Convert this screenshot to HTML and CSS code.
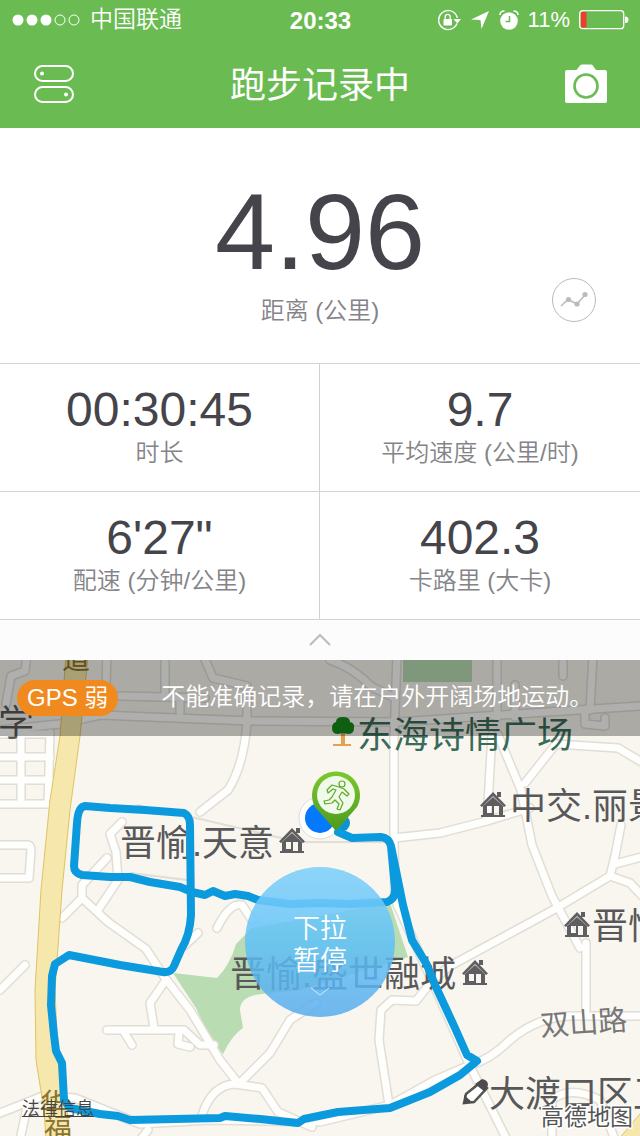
FILE: index.html
```html
<!DOCTYPE html>
<html lang="zh-CN">
<head>
    <meta charset="UTF-8">
    <meta name="viewport" content="width=device-width, initial-scale=1.0">
    <title>跑步记录中</title>
    <link rel="stylesheet" href="styles.css">
</head>
<body>

<header>
    <div class="status">
        <div class="carrier">
            <svg width="68" height="12" viewBox="0 0 68 12">
                <g fill="#fff"><circle cx="6" cy="6" r="5.5"/><circle cx="20" cy="6" r="5.5"/><circle cx="34" cy="6" r="5.5"/></g>
                <g fill="none" stroke="#fff"><circle cx="48" cy="6" r="5"/><circle cx="62" cy="6" r="5"/></g>
            </svg>
            <span>中国联通</span>
        </div>
        <time>20:33</time>
        <div class="indicators">
            <svg width="24" height="22" viewBox="0 0 24 22">
                <path d="M20 14.500A9.500 9.500 0 1 1 19.500 6.500L20.300 9" fill="none" stroke="#fff" stroke-width="1.400"/>
                <path d="M16.500 10h7.500l-3.700 4.500z" fill="#fff"/>
                <rect x="6.500" y="10" width="8.500" height="6.500" rx=".8" fill="#fff"/>
                <path d="M8.200 10.500V7.800a2.500 2.500 0 0 1 5 0v2.700" fill="none" stroke="#fff" stroke-width="1.300"/>
            </svg>
            <svg width="20" height="20" viewBox="0 0 20 20"><path d="M19 1 11.500 19 10.500 9.900 1 9.400z" fill="#fff"/></svg>
            <svg width="20" height="22" viewBox="0 0 20 22">
                <circle cx="10" cy="12" r="8.800" fill="#fff"/>
                <path d="M1 6Q1 2 5.500 2M19 6Q19 2 14.500 2" fill="none" stroke="#fff" stroke-width="1.600"/>
                <path d="M10.500 7v5.500H6.500" fill="none" stroke="#6abb52" stroke-width="1.500"/>
            </svg>
            <span>11%</span>
            <svg width="50" height="20" viewBox="0 0 50 20">
                <rect x=".7" y=".7" width="44" height="18" rx="3" fill="none" stroke="#fff" stroke-width="1.300"/>
                <rect x="2" y="2" width="5.500" height="15.500" rx="1" fill="#ee3d2b"/>
                <path d="M46 6.500q3.500 0 3.500 3.300T46 13z" fill="#fff"/>
            </svg>
        </div>
    </div>
    <nav>
        <button class="icon" aria-label="设置">
            <svg width="42" height="38" viewBox="0 0 42 38" fill="none" stroke="#fff" stroke-width="2">
                <rect x="2" y="1" width="38" height="15" rx="7.500"/>
                <rect x="2" y="22" width="38" height="15" rx="7.500"/>
                <circle cx="9" cy="8.500" r="1"/><circle cx="33" cy="29.500" r="1"/>
            </svg>
        </button>
        <h1>跑步记录中</h1>
        <button class="icon" aria-label="拍照">
            <svg width="42" height="40" viewBox="0 0 42 40">
                <path d="M2 6h9.500l3.500-4.500Q16 .5 17 .5h9q1 0 1.800 1L31 6h9q2 0 2 2v29q0 2-2 2H2q-2 0-2-2V8q0-2 2-2z" fill="#fff"/>
                <circle cx="21" cy="22" r="11.500" fill="none" stroke="#6abb52" stroke-width="2.600"/>
            </svg>
        </button>
    </nav>
</header>

<main>
    <section class="distance">
        <div class="value">4.96</div>
        <div class="label">距离 (公里)</div>
        <button class="chart" aria-label="图表">
            <svg width="28" height="18" viewBox="0 0 28 18" fill="none" stroke="#bbb" stroke-width="1.500">
                <path d="M1 15l7-6.500L17 13l8-9"/>
                <g fill="#bbb" stroke="none"><circle cx="8.500" cy="8.500" r="2.600"/><circle cx="17" cy="13" r="2.600"/><circle cx="25" cy="3.500" r="2.600"/></g>
            </svg>
        </button>
    </section>

    <section class="stats">
        <div class="stat"><div class="value">00:30:45</div><div class="label">时长</div></div>
        <div class="stat"><div class="value">9.7</div><div class="label">平均速度 (公里/时)</div></div>
        <div class="stat"><div class="value">6'27"</div><div class="label">配速 (分钟/公里)</div></div>
        <div class="stat"><div class="value">402.3</div><div class="label">卡路里 (大卡)</div></div>
    </section>

    <button class="collapse" aria-label="收起">
        <svg width="24" height="14" viewBox="0 0 24 14"><path d="M2 12 12 2l10 10" fill="none" stroke="#bbb" stroke-width="2"/></svg>
    </button>

    <section class="map">
        <svg class="canvas" viewBox="0 660 640 476" preserveAspectRatio="xMidYMin slice">
            <defs>
                <g id="roads">
                    <path d="M27 655 25 671 11 676 6 704M107 655 105 712M165 655V697M203 655 213 678 247 686V722M120 696 205 698M180 698V712"/>
                    <path d="M0 730 60 724 100 715 250 721 400 722 470 717 640 706"/>
                    <path d="M247 722Q244 765 228 790L200 812"/>
                    <path d="M330 660Q352 667 372 687L393 697M397 655 394 740V840L395 900 428 972 470 1066 507 1140"/>
                    <path d="M497 655V717M515 717V685M593 655 590 710M563 662V676M585 714V724L605 726V718"/>
                    <path d="M492 735 487 820M498 735 521 790 532 845 552 896 580 948M525 783 556 744 618 748 645 764"/>
                    <path d="M394 838 440 833 487 821 530 808M621 825 615 856 610 876M615 864 645 856"/>
                    <path d="M430 982 450 966 555 909 610 876 630 883 648 902M586 943V1015"/>
                    <path d="M470 1065Q490 1060 510 1040 540 1015 575 1016L640 1016"/>
                    <path d="M428 986 416 1001 392 1000 381 1010 379 1040 389 1105"/>
                    <path d="M-5 1115 43 1096 75 1098 140 1124 210 1120 320 1122 390 1105 435 1080 470 1065"/>
                    <path d="M202 1115Q212 1085 235 1084L262 1088Q270 1100 278 1112L312 1127M238 1083 220 1060 190 1010 165 978 146 949 108 922 82 898 62 918M82 898V885L107 858M98 910 118 880 116 852 110 834 122 822"/>
                    <path d="M240 1083 270 1053 290 1020 316 1003M107 1030H184L200 1045H214M124 1032 132 1045M154 1028 150 1003 166 980M179 1033 178 1044 190 1047M217 928Q230 902 242 905L252 920M184 946 198 933"/>
                    <path d="M0 990 25 965M28 1102 20 1140M148 1130 140 1140M552 1140V1100Q570 1085 600 1100L615 1140"/>
                    <path d="M0 845H27Q31 845 31 850L29 878H0M50 733 48 804H0M21 736V804M0 734H50M0 757H50M0 780H50"/>
                </g>
                <g id="house" fill="#5f5f61">
                    <path d="M0 13.500 13 0 26 13.500 24 15 13 4 2 15zM17 0h4v5h-4z"/>
                    <path fill-rule="evenodd" d="M3 14 13 5 23 14V25H3zM7 14v7h5v-7zM14 14v10h5V14z"/>
                    <path d="M1 23h24v2H1z"/>
                </g>
                <linearGradient id="pin" x1="0" y1="0" x2="0" y2="1"><stop offset="0" stop-color="#7ac92e"/><stop offset="1" stop-color="#4d9a1e"/></linearGradient>
            </defs>

            <rect y="660" width="640" height="476" fill="#f8f6ef"/>
            <g fill="#b9dcb2">
                <path d="M403 655H472V682H403z"/>
                <path d="M173 973 217 978Q230 965 236 944L252 928 390 903 408 957 300 990 262 994Q240 996 240 1010L243 1028Q232 1035 223 1054L208 1035 196 1008z"/>
            </g>
            <path d="M137 805 200 819 290 840M300 842H394M130 873 188 880V860" fill="none" stroke="#e2ddd5" stroke-width="2"/>
            <use href="#roads" class="casing"/>
            <use href="#roads" class="street"/>
            <path d="M66 655 60 736 50 800 41 890 35 990 36 1060 44 1110 46 1140H70L66 1100 58 1060 55 990 62 890 70 810 80 736 88 655z" fill="#f6e8ac" stroke="#dfc460"/>
            <path d="M618 1140 645 1108V1140z" fill="#f6e8ac" stroke="#dfc460"/>

            <g class="place">
                <text x="-2" y="736">学</text>
                <text x="120" y="856">晋愉.天意</text>
                <text x="510" y="819">中交.丽景</text>
                <text x="592" y="939">晋愉</text>
                <text x="230" y="987">晋愉.盛世融城</text>
                <text x="489" y="1107">大渡口区卫</text>
                <text x="357" y="748" class="park">东海诗情广场</text>
            </g>
            <g class="road-name">
                <text x="62" y="669">道</text>
                <text x="40" y="1114">华</text>
                <text x="44" y="1139">福</text>
                <text x="541" y="1036" class="side" transform="rotate(-4 541 1036)">双山路</text>
            </g>
            <use href="#house" x="279" y="828"/>
            <use href="#house" x="480" y="792"/>
            <use href="#house" x="564" y="912"/>
            <use href="#house" x="462" y="960"/>
            <path d="M466 1094 481 1082 487 1088 474 1102 464 1103z" fill="#fff" stroke="#555" stroke-width="2.500"/>
            <path d="M475 1084 482 1079Q488 1080 488 1085L485 1092zM464 1104V1095L472 1102z" fill="#4c4c4c"/>
            <path d="M341 730h4v14h6v2h-18v-2h8z" fill="#e3a24b"/>
            <path d="M343 717q7 0 7 5 5 1 4 6 0 6-6 6l-5-1-5 1q-6 0-6-6 0-5 4-6 0-5 7-5z" fill="#168a1c"/>

            <g class="location">
                <circle cx="320" cy="818" r="21" fill="#fff" stroke="#dcdcdc"/>
                <circle cx="320" cy="818" r="15" fill="#0479fb"/>
            </g>
            <circle cx="341" cy="823" r="9" fill="#0f93cf"/>
            <path class="route" d="M338 832 352 838 381 837Q389 838 391 846L395 888Q396 899 387 902L350 904 320 903 290 904 258 900 248 896 235 894 225 896 213 891 205 895 192 892 180 887 150 882 130 877 110 877 82 875Q74 873 74 866L77 823Q78 807 85 806L110 808 145 810 184 813Q190 816 190 825L191 915Q190 935 181 950L174 966Q171 973 163 972L120 965 69 955 55 964 52 976 51 1005 54 1035 56 1051 62 1063 64 1100 70 1108 100 1114 118 1116 130 1120 220 1118 225 1116 260 1119 298 1123 304 1119 338 1112 390 1108 430 1092 460 1075 477 1061 467 1055 455 1028 435 985 427 965 412 940 403 905 391 846"/>

            <path d="M336 831 315 807A24 24 0 1 1 357 807z" fill="url(#pin)"/>
            <circle cx="336" cy="795" r="19" fill="#f1faea"/>
            <g fill="none" stroke="#5aaa26" stroke-width="1.200" stroke-linejoin="round">
                <circle cx="342" cy="784" r="3"/>
                <path d="M339 787 332 785 327 790 328 793 333 789 336 790 332 797 329 800 324 801 325 804 332 803 335 800 339 804 337 809 340 810 343 803 339 797 342 792 347 796 349 794 344 789z"/>
            </g>
            <text x="541" y="1125" class="brand">高德地图</text>
        </svg>

        <div class="notice">
            <span class="gps">GPS 弱</span>
            <span>不能准确记录，请在户外开阔场地运动。</span>
        </div>
        <button class="pause">
            <span>下拉<br>暂停</span>
            <svg width="20" height="10" viewBox="0 0 20 10"><path d="M1 1 10 8 19 1" fill="none" stroke="#fff" stroke-opacity=".7"/></svg>
        </button>
        <a class="legal" href="#">法律信息</a>
    </section>
</main>

</body>
</html>
```
FILE: styles.css
```css
*{ box-sizing:border-box; }
body{
    margin:0;
    min-height:100vh;
    display:flex;
    flex-direction:column;
    font-family:"Liberation Sans", "Noto Sans CJK SC", sans-serif;
    background:#fff;
    color:#45444b;
}
button{ border:0; padding:0; background:none; color:inherit; font:inherit; }
svg{ display:block; }

/* top bar */
header{ background:#6abb52; color:#fff; height:128px; }
.status{
    display:grid;
    grid-template-columns:1fr auto 1fr;
    align-items:center;
    height:40px;
    padding:0 11px 0 12px;
    font-size:22px;
}
.carrier{ display:flex; align-items:center; gap:10px; font-size:23px; line-height:28px; font-weight:350; }
.carrier span{ padding-bottom:2px; }
.status time{ font-size:24px; line-height:28px; padding-top:2px; font-weight:bold; }
.indicators{ display:flex; align-items:center; justify-content:flex-end; gap:9px; }
nav{ display:flex; align-items:center; justify-content:space-between; height:88px; padding:0 33px; }
h1{ margin:0; padding-top:3px; font-size:36px; font-weight:400; line-height:48px; }

/* numbers */
main{ flex:1; display:flex; flex-direction:column; }
.value{ font-size:48px; line-height:48px; }
.label{ margin-top:4px; font-size:24px; line-height:30px; font-weight:350; color:#848488; }
.distance{
    position:relative;
    height:236px;
    padding-top:50px;
    text-align:center;
    border-bottom:1px solid #d2d2d2;
}
.distance .value{ font-size:108px; line-height:108px; }
.distance .label{ margin-top:10px; }
.chart{
    position:absolute;
    right:44px;
    bottom:41px;
    width:44px;
    height:44px;
    border:1px solid #bbb;
    border-radius:50%;
    display:flex;
    align-items:center;
    justify-content:center;
}
.stats{ display:grid; grid-template-columns:1fr 1fr; }
.stat{ height:128px; padding-top:22px; text-align:center; border-bottom:1px solid #d2d2d2; }
.stat:nth-child(odd){ border-right:1px solid #d2d2d2; }
.collapse{ height:40px; display:flex; align-items:center; justify-content:center; background:#fcfcfc; }

/* map */
.map{ position:relative; flex:1; min-height:476px; overflow:hidden; }
.canvas{ position:absolute; width:100%; height:100%; }
.casing, .street{ fill:none; stroke-linecap:round; stroke-linejoin:round; }
.casing{ stroke:#e2ddd5; stroke-width:10px; }
.street{ stroke:#fefefc; stroke-width:7px; }
.route{ fill:none; stroke:#0b9ade; stroke-width:8px; stroke-linecap:round; stroke-linejoin:round; }
.place{ font-size:36px; fill:#58585a; }
.place .park{ fill:#3a6b5a; }
.road-name{ font-size:28px; fill:#8a7434; }
.road-name .side{ font-size:29px; fill:#777; }
.brand{ font-size:23px; fill:#555; stroke:#fff; stroke-width:3px; paint-order:stroke; }

.notice{
    position:relative;
    display:flex;
    align-items:center;
    gap:43px;
    height:76px;
    padding-left:17px;
    background:rgba(0,0,0,.31);
    color:#fff;
    font-size:24px;
    line-height:36px;
    font-weight:350;
    white-space:nowrap;
}
.notice span{ padding-bottom:3px; }
.notice .gps{ height:36px; padding:0 10px; border-radius:18px; background:#f18a1e; }
.pause{
    position:absolute;
    top:207px;
    left:50%;
    width:150px;
    height:150px;
    margin-left:-75px;
    display:flex;
    flex-direction:column;
    align-items:center;
    justify-content:flex-end;
    gap:10px;
    padding-bottom:20px;
    border-radius:50%;
    background:linear-gradient(rgba(130,208,250,.9), rgba(92,192,250,.82) 50%, rgba(90,172,236,.86));
    color:#fff;
    font-size:27px;
    line-height:32px;
    font-weight:350;
}
.legal{ position:absolute; left:22px; top:438px; font-size:18px; line-height:22px; font-weight:350; color:#444; }
```
